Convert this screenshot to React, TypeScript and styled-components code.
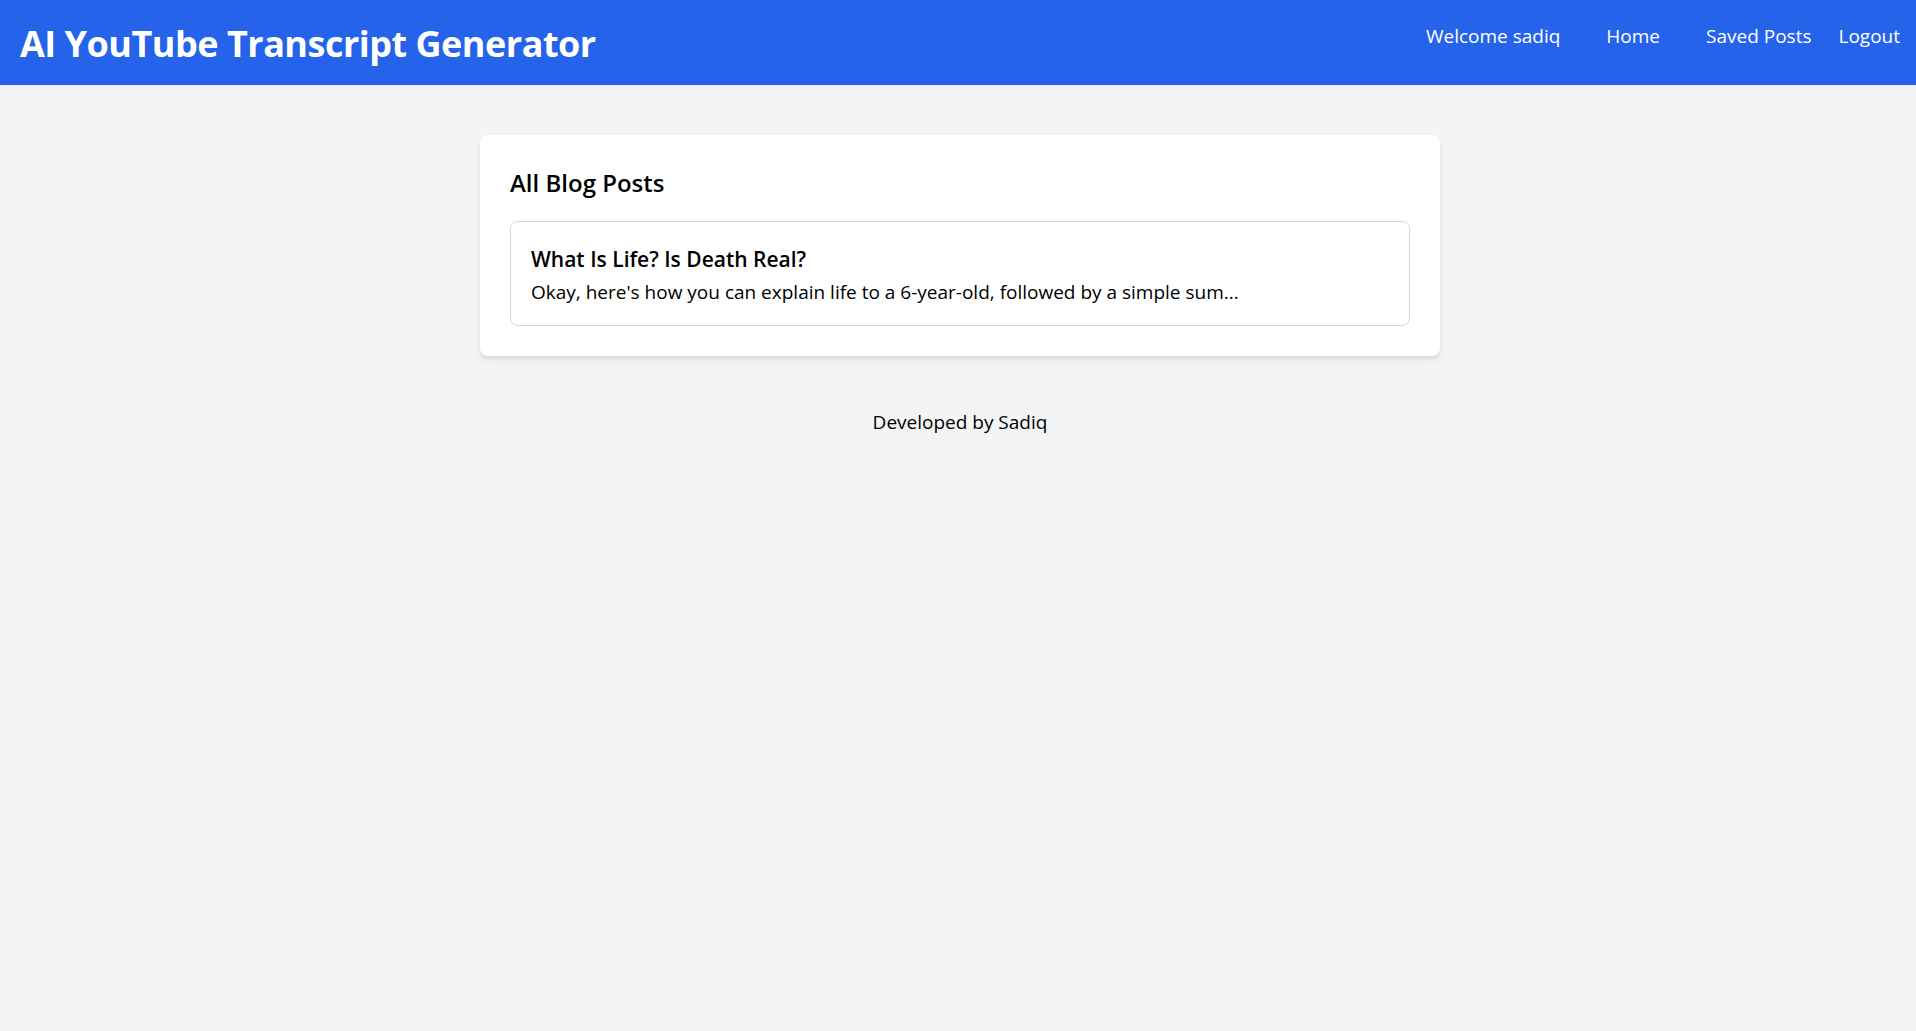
import React from "react";
import styled, { createGlobalStyle } from "styled-components";

const GlobalStyle = createGlobalStyle`
  html, body {
    margin: 0;
    padding: 0;
    background: #f3f4f6;
    font-family: "Open Sans", "Noto Sans", sans-serif;
    color: #000;
  }
  * { box-sizing: border-box; }
`;

const Page = styled.div`
  min-height: 1031px;
  background: #f3f4f6;
  display: flex;
  flex-direction: column;
`;

const Header = styled.header`
  height: 85px;
  background: #2563eb;
  color: #fff;
  display: flex;
  justify-content: space-between;
  align-items: flex-start;
  padding: 0 16px 0 20px;
`;

const Title = styled.h1`
  margin: 0;
  padding-top: 24px;
  font-size: 36px;
  line-height: 40px;
  font-weight: 700;
  letter-spacing: -0.5px;
`;

const Nav = styled.nav`
  display: flex;
  align-items: center;
  padding-top: 22px;
`;

const NavItem = styled.span<{ $space: number }>`
  font-size: 19px;
  line-height: 28px;
  color: #fff;
  margin-right: ${(p) => p.$space}px;
  cursor: pointer;
`;

const Main = styled.main`
  display: flex;
  flex-direction: column;
  align-items: center;
  padding: 50px 0 0 4px;
`;

const Card = styled.section`
  width: 960px;
  background: #fff;
  border-radius: 8px;
  box-shadow: 0 4px 6px -1px rgba(0, 0, 0, 0.1), 0 2px 4px -2px rgba(0, 0, 0, 0.1);
  padding: 32px 30px 30px;
`;

const Heading = styled.h2`
  margin: 0 0 22px;
  font-size: 24px;
  line-height: 32px;
  font-weight: 600;
`;

const PostList = styled.div`
  display: flex;
  flex-direction: column;
  gap: 16px;
`;

const PostItem = styled.article`
  border: 1px solid #d1d5db;
  border-radius: 8px;
  padding: 23px 20px 19px;
  cursor: pointer;
`;

const PostTitle = styled.h3`
  margin: 0 0 5px;
  font-size: 21px;
  line-height: 28px;
  font-weight: 600;
`;

const PostExcerpt = styled.p`
  margin: 0;
  font-size: 19px;
  line-height: 28px;
`;

const Footer = styled.footer`
  text-align: center;
  margin-top: 52px;
  font-size: 19px;
  line-height: 28px;
`;

const posts = [
  {
    title: "What Is Life? Is Death Real?",
    excerpt:
      "Okay, here's how you can explain life to a 6-year-old, followed by a simple sum...",
  },
];

export default function App() {
  return (
    <>
      <GlobalStyle />
      <Page>
        <Header>
          <Title>AI YouTube Transcript Generator</Title>
          <Nav>
            <NavItem $space={46}>Welcome sadiq</NavItem>
            <NavItem $space={46}>Home</NavItem>
            <NavItem $space={27}>Saved Posts</NavItem>
            <NavItem $space={0}>Logout</NavItem>
          </Nav>
        </Header>
        <Main>
          <Card>
            <Heading>All Blog Posts</Heading>
            <PostList>
              {posts.map((p) => (
                <PostItem key={p.title}>
                  <PostTitle>{p.title}</PostTitle>
                  <PostExcerpt>{p.excerpt}</PostExcerpt>
                </PostItem>
              ))}
            </PostList>
          </Card>
          <Footer>Developed by Sadiq</Footer>
        </Main>
      </Page>
    </>
  );
}
